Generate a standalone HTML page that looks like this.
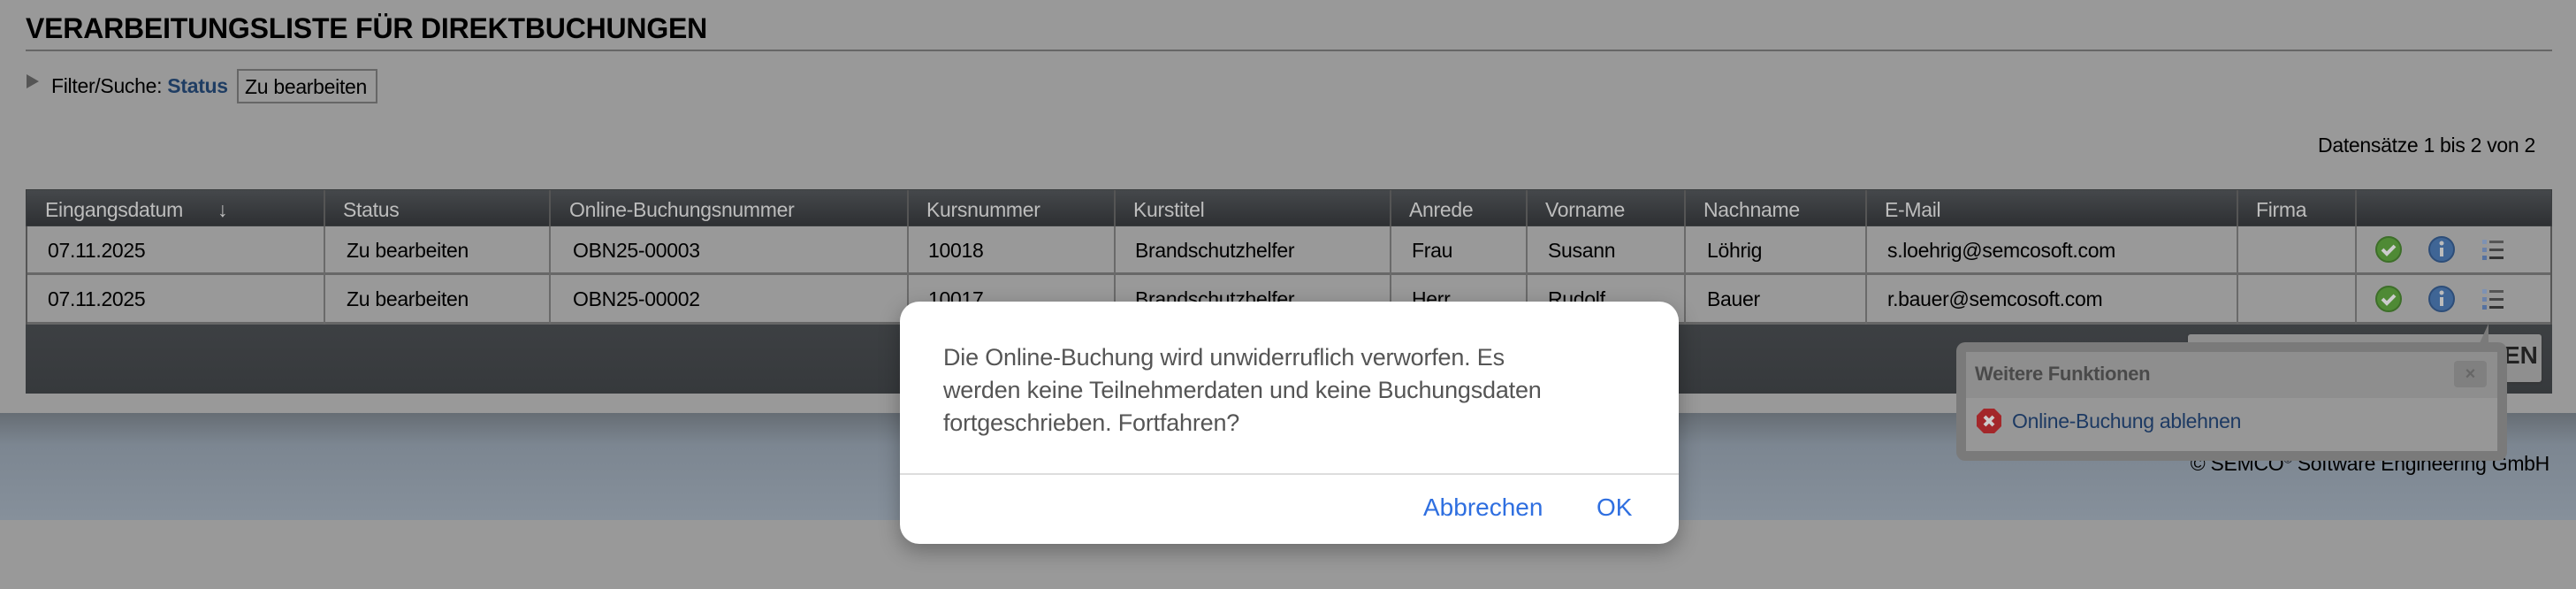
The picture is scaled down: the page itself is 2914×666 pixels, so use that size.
<!DOCTYPE html>
<html><head><meta charset="utf-8"><style>
*{margin:0;padding:0;box-sizing:border-box}
body{width:2914px;height:666px;background:#999;position:relative;overflow:hidden;font-family:"Liberation Sans",Arial,sans-serif;color:#000}
.a{position:absolute;white-space:nowrap}
.t{font-size:23px;letter-spacing:-0.3px}
.hd{position:absolute;top:214px;left:29px;width:2858px;height:42px;background:linear-gradient(#45484b,#2e3033);border:1px solid #3a3c3e}
.hc{position:absolute;top:224px;font-size:23px;letter-spacing:-0.3px;color:#bdbdbd}
.row{position:absolute;left:29px;width:2858px;height:55px;background:#999;border-bottom:3px solid #676767}
.vl{position:absolute;width:2px;background:#6a6a6a}
.vh{position:absolute;width:2px;background:#555;top:215px;height:41px}
</style></head><body>
<div class="a" style="left:29px;top:14px;font-size:32px;font-weight:bold;letter-spacing:-0.2px">VERARBEITUNGSLISTE FÜR DIREKTBUCHUNGEN</div>
<div class="a" style="left:29px;top:56px;width:2858px;height:2px;background:#666"></div>
<div class="a" style="left:30px;top:84px;width:0;height:0;border-left:14px solid #555;border-top:8px solid transparent;border-bottom:8px solid transparent"></div>
<div class="a t" style="left:58px;top:84px">Filter/Suche: <b style="color:#1f3d63">Status</b></div>
<div class="a t" style="left:268px;top:78px;width:159px;height:39px;border:2px solid #666;padding:5px 0 0 7px">Zu bearbeiten</div>
<div class="a t" style="right:46px;top:151px">Datensätze 1 bis 2 von 2</div>

<div class="row" style="top:256px;height:55px"></div>
<div class="row" style="top:311px;height:56px"></div>
<div class="a" style="left:29px;top:214px;width:2858px;height:231px;border:2px solid #555;border-top:0"></div>
<div class="hd"></div>
<div class="a" style="left:29px;top:367px;width:2858px;height:78px;background:linear-gradient(#3d4043,#36393c)"></div>
<div class="a" style="left:2475px;top:378px;width:400px;height:54px;background:#8f8f8f;border-radius:3px;box-shadow:0 1px 2px #333"></div>
<div class="a" style="left:2832px;top:386px;font-size:28px;font-weight:bold;color:#222">EN</div>

<div class="vh" style="left:366px"></div><div class="vh" style="left:621px"></div><div class="vh" style="left:1026px"></div><div class="vh" style="left:1260px"></div><div class="vh" style="left:1572px"></div><div class="vh" style="left:1726px"></div><div class="vh" style="left:1905px"></div><div class="vh" style="left:2110px"></div><div class="vh" style="left:2530px"></div><div class="vh" style="left:2664px"></div>
<div class="vl" style="left:366px;top:256px;height:111px"></div><div class="vl" style="left:621px;top:256px;height:111px"></div><div class="vl" style="left:1026px;top:256px;height:111px"></div><div class="vl" style="left:1260px;top:256px;height:111px"></div><div class="vl" style="left:1572px;top:256px;height:111px"></div><div class="vl" style="left:1726px;top:256px;height:111px"></div><div class="vl" style="left:1905px;top:256px;height:111px"></div><div class="vl" style="left:2110px;top:256px;height:111px"></div><div class="vl" style="left:2530px;top:256px;height:111px"></div><div class="vl" style="left:2664px;top:256px;height:111px"></div>

<div class="hc" style="left:51px">Eingangsdatum</div><div class="hc" style="left:246px">↓</div>
<div class="hc" style="left:388px">Status</div><div class="hc" style="left:644px">Online-Buchungsnummer</div>
<div class="hc" style="left:1048px">Kursnummer</div><div class="hc" style="left:1282px">Kurstitel</div>
<div class="hc" style="left:1594px">Anrede</div><div class="hc" style="left:1748px">Vorname</div>
<div class="hc" style="left:1927px">Nachname</div><div class="hc" style="left:2132px">E-Mail</div><div class="hc" style="left:2552px">Firma</div>

<div class="a t" style="left:54px;top:270px">07.11.2025</div><div class="a t" style="left:392px;top:270px">Zu bearbeiten</div><div class="a t" style="left:648px;top:270px">OBN25-00003</div><div class="a t" style="left:1050px;top:270px">10018</div><div class="a t" style="left:1284px;top:270px">Brandschutzhelfer</div><div class="a t" style="left:1597px;top:270px">Frau</div><div class="a t" style="left:1751px;top:270px">Susann</div><div class="a t" style="left:1931px;top:270px">Löhrig</div><div class="a t" style="left:2135px;top:270px">s.loehrig@semcosoft.com</div>
<div class="a t" style="left:54px;top:325px">07.11.2025</div><div class="a t" style="left:392px;top:325px">Zu bearbeiten</div><div class="a t" style="left:648px;top:325px">OBN25-00002</div><div class="a t" style="left:1050px;top:325px">10017</div><div class="a t" style="left:1284px;top:325px">Brandschutzhelfer</div><div class="a t" style="left:1597px;top:325px">Herr</div><div class="a t" style="left:1751px;top:325px">Rudolf</div><div class="a t" style="left:1931px;top:325px">Bauer</div><div class="a t" style="left:2135px;top:325px">r.bauer@semcosoft.com</div>

<svg class="a" style="left:2680px;top:262px" width="170" height="100">
<g id="ic">
<circle cx="22" cy="20" r="14" fill="#4f8a35" stroke="#3d6e29" stroke-width="2"/><path d="M15 20l5 5 9-9" stroke="#ccc" stroke-width="4" fill="none"/>
<circle cx="82" cy="20" r="14" fill="#3f6595" stroke="#2d4d78" stroke-width="2"/><rect x="80" y="18" width="4" height="10" fill="#bbb"/><circle cx="82" cy="13" r="2.5" fill="#bbb"/>
<rect x="128" y="9" width="5" height="5" fill="#7e92b3"/><rect x="136" y="10" width="16" height="3" fill="#555"/>
<rect x="128" y="18" width="5" height="5" fill="#6b82aa"/><rect x="136" y="19" width="16" height="3" fill="#444"/>
<rect x="128" y="27" width="5" height="5" fill="#5571a0"/><rect x="136" y="28" width="16" height="3" fill="#333"/>
</g>
<use href="#ic" y="56"/>
</svg>

<div class="a" style="left:0;top:467px;width:2914px;height:121px;background:linear-gradient(#666d74,#7c8691 30%,#86909b)"></div>
<div class="a t" style="right:30px;top:511px">© SEMCO<sup style="font-size:13px">©</sup> Software Engineering GmbH</div>

<div class="a" style="left:2213px;top:387px;width:623px;height:134px;background:#7a7a7a;border-radius:10px"></div>
<div class="a" style="left:2805px;top:366px;width:0;height:0;border-bottom:22px solid #7a7a7a;border-left:10px solid transparent"></div>
<div class="a" style="left:2224px;top:398px;width:601px;height:112px;background:#979797"></div>
<div class="a" style="left:2224px;top:398px;width:601px;height:52px;background:#8e8e8e"></div>
<div class="a" style="left:2234px;top:410px;font-size:22px;font-weight:bold;color:#4a4a4a;letter-spacing:-0.3px">Weitere Funktionen</div>
<div class="a" style="left:2776px;top:408px;width:37px;height:30px;background:#808080;border-radius:4px;color:#666;font-weight:bold;font-size:20px;text-align:center;line-height:30px">×</div>
<svg class="a" style="left:2235px;top:461px" width="30" height="30"><polygon points="9,1 21,1 29,9 29,21 21,29 9,29 1,21 1,9" fill="#a3272a"/><path d="M10 10l10 10M20 10l-10 10" stroke="#ccc" stroke-width="4"/></svg>
<div class="a t" style="left:2276px;top:463px;color:#1d3a63">Online-Buchung ablehnen</div>

<div class="a" style="left:1018px;top:341px;width:881px;height:274px;background:#fff;border-radius:22px;box-shadow:0 8px 24px rgba(0,0,0,.3)"></div>
<div class="a" style="left:1067px;top:386px;font-size:27px;line-height:37px;color:#555;white-space:normal;width:820px;letter-spacing:-0.2px">Die Online-Buchung wird unwiderruflich verworfen. Es<br>werden keine Teilnehmerdaten und keine Buchungsdaten<br>fortgeschrieben. Fortfahren?</div>
<div class="a" style="left:1018px;top:535px;width:881px;height:2px;background:#ddd"></div>
<div class="a" style="left:1610px;top:558px;font-size:28px;color:#2f6fe0">Abbrechen</div>
<div class="a" style="left:1806px;top:558px;font-size:28px;color:#2f6fe0">OK</div>
</body></html>
